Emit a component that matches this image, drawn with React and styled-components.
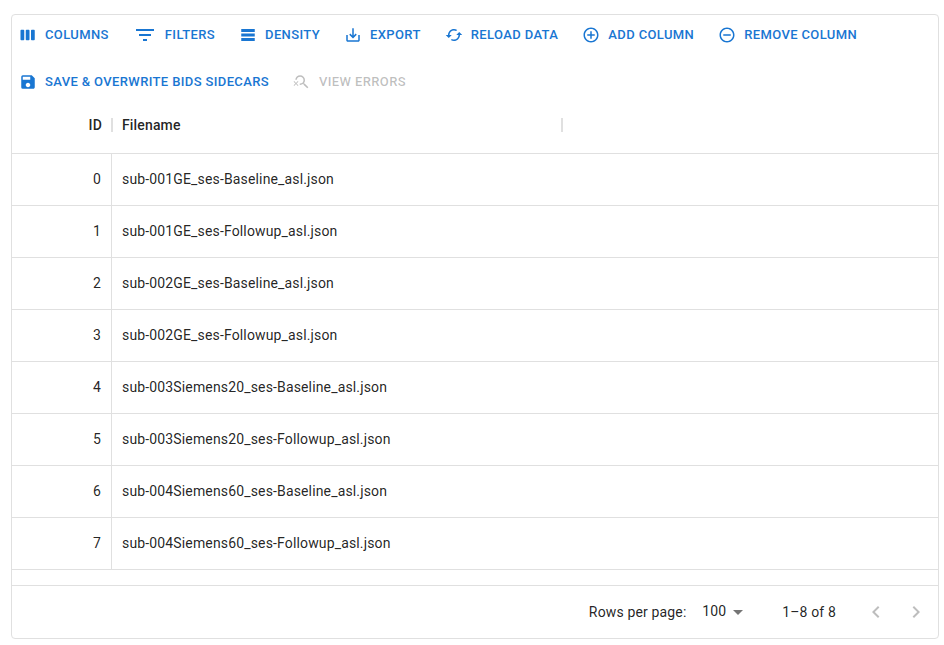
import React from "react";
import styled, { createGlobalStyle } from "styled-components";
import {
  MdCached,
  MdControlPoint,
  MdRemoveCircleOutline,
  MdSave,
  MdSearchOff,
  MdKeyboardArrowLeft,
  MdKeyboardArrowRight,
  MdArrowDropDown,
} from "react-icons/md";

const line = "#e0e0e0";

const GlobalStyle = createGlobalStyle`
  * { box-sizing: border-box; }
  body { margin: 0; background: #fff; }
`;

const Page = styled.main`
  padding: 14px 5px 6px 11px;
  height: 645px;
  font-family: Roboto, "Liberation Sans", sans-serif;
  font-size: 14px;
  line-height: 1.43;
  letter-spacing: 0.01071em;
  color: rgba(0, 0, 0, 0.87);
`;

const Grid = styled.section`
  display: flex;
  flex-direction: column;
  width: 928px;
  height: 625px;
  border: 1px solid ${line};
  border-radius: 4px;
`;

const Toolbar = styled.div`
  display: flex;
  flex-wrap: wrap;
  align-content: flex-start;
  align-items: center;
  gap: 16px 16.04px;
  padding: 4px 4px 0;
  height: 82.5px;
`;

const ToolButton = styled.button`
  display: inline-flex;
  align-items: center;
  justify-content: center;
  min-width: 64px;
  padding: 4px 5px;
  border: 0;
  border-radius: 4px;
  background: transparent;
  font: 500 13px/1.75 Roboto, "Liberation Sans", sans-serif;
  letter-spacing: 0.02857em;
  text-transform: uppercase;
  white-space: nowrap;
  color: ${(p) => (p.disabled ? "rgba(0, 0, 0, 0.26)" : "#1976d2")};
`;

const StartIcon = styled.span`
  display: inherit;
  margin: 0 8px 0 -2px;

  svg {
    display: block;
    width: ${(p) => p.$size}px;
    height: ${(p) => p.$size}px;
    fill: currentColor;
  }
`;

const HeaderRow = styled.div`
  display: flex;
  flex: none;
  height: 56.5px;
  align-items: center;
  border-bottom: 1px solid ${line};
  font-weight: 500;
`;

const HeaderCell = styled.div`
  display: flex;
  align-items: center;
  justify-content: ${(p) => (p.$end ? "flex-end" : "space-between")};
  gap: 9px;
  width: ${(p) => p.$width}px;
  padding-left: 10px;
`;

const Separator = styled.span`
  width: 2px;
  height: 14px;
  margin-right: -1px;
  background: ${line};
`;

const Row = styled.div`
  display: flex;
  flex: none;
  height: 52px;
  border-bottom: 1px solid ${line};
  line-height: 51px;
`;

const IdCell = styled.div`
  width: 100px;
  padding: 0 10px;
  border-right: 1px solid ${line};
  text-align: right;
`;

const NameCell = styled.div`
  padding: 0 10px;
`;

const Footer = styled.footer`
  display: flex;
  align-items: center;
  justify-content: flex-end;
  height: 53px;
  margin-top: auto;
  padding-right: 2px;
  border-top: 1px solid ${line};
`;

const PageSize = styled.div`
  display: flex;
  align-items: center;
  margin: 0 32px 2px 15.7px;

  svg {
    width: 24px;
    height: 24px;
    margin: 1px 0 -1px;
    color: rgba(0, 0, 0, 0.54);
  }
`;

const Pager = styled.div`
  display: flex;
  margin-left: 20px;
`;

const PageButton = styled.button`
  display: flex;
  padding: 8px;
  border: 0;
  background: transparent;
  color: rgba(0, 0, 0, 0.26);

  svg {
    width: 24px;
    height: 24px;
  }
`;

const Glyph = ({ d }) => (
  <svg viewBox="0 0 24 24">
    <path d={d} />
  </svg>
);

const columnsPath =
  "M6 5H3c-.55 0-1 .45-1 1v12c0 .55.45 1 1 1h3c.55 0 1-.45 1-1V6c0-.55-.45-1-1-1zm14 0h-3c-.55 0-1 .45-1 1v12c0 .55.45 1 1 1h3c.55 0 1-.45 1-1V6c0-.55-.45-1-1-1zm-7 0h-3c-.55 0-1 .45-1 1v12c0 .55.45 1 1 1h3c.55 0 1-.45 1-1V6c0-.55-.45-1-1-1z";
const filterPath = "M10 18h4v-2h-4v2zM3 6v2h18V6H3zm3 7h12v-2H6v2z";
const densityPath = "M21 8H3V4h18v4zm0 2H3v4h18v-4zm0 6H3v4h18v-4z";
const exportPath =
  "M19 12v7H5v-7H3v7c0 1.1.9 2 2 2h14c1.1 0 2-.9 2-2v-7h-2zm-6 .67l2.59-2.58L17 11.5l-5 5-5-5 1.41-1.41L11 12.67V3h2z";

const actions = [
  { label: "Columns", icon: <Glyph d={columnsPath} /> },
  { label: "Filters", icon: <Glyph d={filterPath} />, size: 24 },
  { label: "Density", icon: <Glyph d={densityPath} /> },
  { label: "Export", icon: <Glyph d={exportPath} /> },
  { label: "Reload Data", icon: <MdCached /> },
  { label: "Add Column", icon: <MdControlPoint /> },
  { label: "Remove Column", icon: <MdRemoveCircleOutline /> },
  { label: "Save & Overwrite BIDS Sidecars", icon: <MdSave /> },
  { label: "View Errors", icon: <MdSearchOff />, disabled: true },
];

const files = ["001GE", "002GE", "003Siemens20", "004Siemens60"].flatMap((s) => [
  `sub-${s}_ses-Baseline_asl.json`,
  `sub-${s}_ses-Followup_asl.json`,
]);

export default function App() {
  return (
    <Page>
      <GlobalStyle />
      <Grid>
        <Toolbar>
          {actions.map((a) => (
            <ToolButton key={a.label} disabled={a.disabled}>
              <StartIcon $size={a.size || 18}>{a.icon}</StartIcon>
              {a.label}
            </ToolButton>
          ))}
        </Toolbar>
        <HeaderRow>
          <HeaderCell $width={100} $end>
            ID
            <Separator />
          </HeaderCell>
          <HeaderCell $width={450}>
            Filename
            <Separator />
          </HeaderCell>
        </HeaderRow>
        {files.map((name, i) => (
          <Row key={name}>
            <IdCell>{i}</IdCell>
            <NameCell>{name}</NameCell>
          </Row>
        ))}
        <Footer>
          <span>Rows per page:</span>
          <PageSize>
            100
            <MdArrowDropDown />
          </PageSize>
          <span>1–8 of 8</span>
          <Pager>
            <PageButton aria-label="Previous page" disabled>
              <MdKeyboardArrowLeft />
            </PageButton>
            <PageButton aria-label="Next page" disabled>
              <MdKeyboardArrowRight />
            </PageButton>
          </Pager>
        </Footer>
      </Grid>
    </Page>
  );
}
